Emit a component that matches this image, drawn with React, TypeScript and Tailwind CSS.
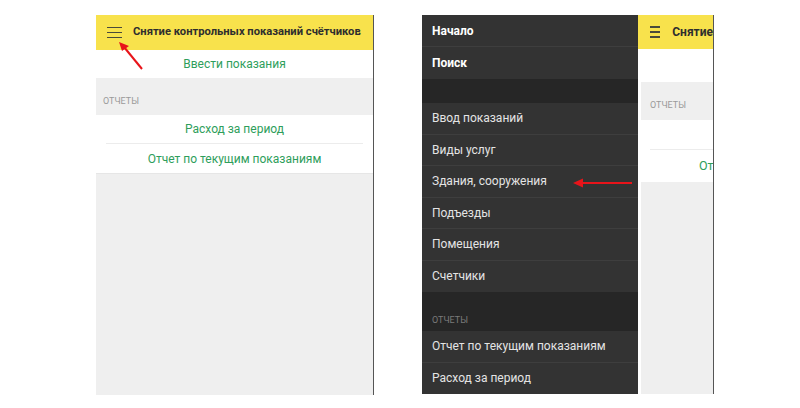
import React from "react";

const font = { fontFamily: "Roboto, 'Noto Sans', Arial, sans-serif" };

function Burger() {
  return (
    <div className="flex flex-col gap-[3.5px] w-[15px]">
      <div className="h-[1.5px] bg-[#4a4a3a]" />
      <div className="h-[1.5px] bg-[#4a4a3a]" />
      <div className="h-[1.5px] bg-[#4a4a3a]" />
    </div>
  );
}

function DrawerRow({ children, bold, last, h }: { children: React.ReactNode; bold?: boolean; last?: boolean; h?: string }) {
  return (
    <div
      className={
        (h ? h : "h-[31.5px]") +
        " flex items-center pl-[10px] bg-[#333333] " +
        (bold ? "font-bold text-white text-[12px] " : "text-[#e4e4e4] text-[12px] ") +
        (last ? "" : "border-b border-[#3e3e3e]")
      }
    >
      {children}
    </div>
  );
}

export default function App() {
  return (
    <div className="relative w-[800px] h-[408px] bg-white overflow-hidden" style={font}>
      <div className="flex pt-[15px]">
        {/* Left phone */}
        <div className="ml-[96px] w-[278px] h-[380px] flex flex-col border-r-[1.5px] border-[#555]">
          <div className="h-[35px] bg-[#f8e24c] flex items-center pl-[11px] gap-[11px]">
            <Burger />
            <span className="text-[11.2px] font-bold text-[#2e2e2e] whitespace-nowrap">
              Снятие контрольных показаний счётчиков
            </span>
          </div>
          <div className="h-[28px] bg-white flex items-center justify-center text-[12px] text-[#2e9e5b]">
            Ввести показания
          </div>
          <div className="h-[37px] bg-[#efefef] flex items-end pl-[7px] pb-[7px] text-[9px] text-[#9a9a9a]">
            ОТЧЕТЫ
          </div>
          <div className="bg-white">
            <div className="h-[29px] mx-[10px] flex items-center justify-center text-[12px] text-[#2e9e5b] border-b border-[#ececec]">
              Расход за период
            </div>
            <div className="h-[30px] flex items-center justify-center text-[12px] text-[#2e9e5b] border-b border-[#e6e6e6]">
              Отчет по текущим показаниям
            </div>
          </div>
          <div className="flex-1 bg-[#efefef]" />
        </div>

        {/* Right phone */}
        <div className="ml-[48px] flex h-[379px]">
          <div className="w-[216px] flex flex-col">
            <DrawerRow bold h="h-[32px]">Начало</DrawerRow>
            <DrawerRow bold last h="h-[32px]">Поиск</DrawerRow>
            <div className="h-[24px] bg-[#262626]" />
            <DrawerRow>Ввод показаний</DrawerRow>
            <DrawerRow>Виды услуг</DrawerRow>
            <DrawerRow>Здания, сооружения</DrawerRow>
            <DrawerRow>Подъезды</DrawerRow>
            <DrawerRow>Помещения</DrawerRow>
            <DrawerRow last>Счетчики</DrawerRow>
            <div className="h-[39px] bg-[#262626] flex items-end pl-[10px] pb-[4px] text-[9px] text-[#7a7a7a]">
              ОТЧЕТЫ
            </div>
            <DrawerRow>Отчет по текущим показаниям</DrawerRow>
            <DrawerRow last>Расход за период</DrawerRow>
          </div>
          <div className="w-[76px] flex flex-col border-r-[1.5px] border-[#555] overflow-hidden">
            <div className="h-[34px] bg-[#f8e24c] flex items-center pl-[12px] gap-[12px] shrink-0">
              <Burger />
              <span className="text-[12px] font-bold text-[#2e2e2e] whitespace-nowrap">Снятие</span>
            </div>
            <div className="flex-1 flex flex-col pl-[3px] bg-white">
              <div className="h-[33px] bg-white" />
              <div className="h-[38px] bg-[#efefef] flex items-end pl-[9px] pb-[8px] text-[9px] text-[#9a9a9a]">
                ОТЧЕТЫ
              </div>
              <div className="bg-white">
                <div className="h-[30px] ml-[9px] border-b border-[#ececec]" />
                <div className="h-[32px] flex items-center pl-[58px] text-[12.5px] text-[#2e9e5b] whitespace-nowrap">
                  Отчет
                </div>
              </div>
              <div className="flex-1 bg-[#efefef]" />
            </div>
          </div>
        </div>
      </div>

      {/* Arrows */}
      <svg className="absolute left-0 top-0" width="800" height="408" viewBox="0 0 800 408">
        <line x1="142" y1="69" x2="124" y2="47" stroke="#e8141a" strokeWidth="2" />
        <polygon points="119,42 129,46 122,51" fill="#e8141a" />
        <line x1="632" y1="183" x2="580" y2="183" stroke="#e8141a" strokeWidth="2" />
        <polygon points="573,183 583,178.5 583,187.5" fill="#e8141a" />
      </svg>
    </div>
  );
}
